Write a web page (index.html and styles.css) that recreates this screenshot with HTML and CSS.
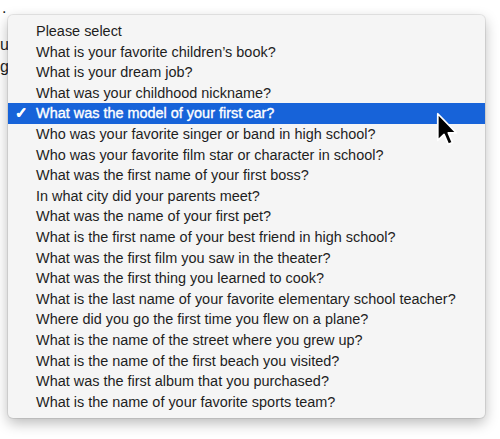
FILE: index.html
```html
<!DOCTYPE html>
<html>
<head>
<meta charset="utf-8">
<link rel="stylesheet" href="styles.css">
</head>
<body>
<div class="page">
  <div class="bg-line l1">.</div>
  <div class="bg-line l2">ue</div>
  <div class="bg-line l3">g</div>
</div>
<ul class="menu">
  <li class="item">Please select</li>
  <li class="item">What is your favorite children’s book?</li>
  <li class="item">What is your dream job?</li>
  <li class="item">What was your childhood nickname?</li>
  <li class="item selected"><span class="check">✓</span>What was the model of your first car?</li>
  <li class="item">Who was your favorite singer or band in high school?</li>
  <li class="item">Who was your favorite film star or character in school?</li>
  <li class="item">What was the first name of your first boss?</li>
  <li class="item">In what city did your parents meet?</li>
  <li class="item">What was the name of your first pet?</li>
  <li class="item">What is the first name of your best friend in high school?</li>
  <li class="item">What was the first film you saw in the theater?</li>
  <li class="item">What was the first thing you learned to cook?</li>
  <li class="item">What is the last name of your favorite elementary school teacher?</li>
  <li class="item">Where did you go the first time you flew on a plane?</li>
  <li class="item">What is the name of the street where you grew up?</li>
  <li class="item">What is the name of the first beach you visited?</li>
  <li class="item">What was the first album that you purchased?</li>
  <li class="item">What is the name of your favorite sports team?</li>
</ul>
<svg class="cursor" width="22" height="36" viewBox="0 0 12.5 20.5">
  <path d="M1 1 L1 16.2 L4.6 12.8 L7 18.4 L9.4 17.4 L7 11.9 L11.6 11.9 Z" fill="#000" stroke="#fff" stroke-width="1" stroke-linejoin="round"/>
</svg>
</body>
</html>
```
FILE: styles.css
```css
html, body {
  margin: 0;
  padding: 0;
  background: #ffffff;
}
body {
  width: 500px;
  height: 439px;
  overflow: hidden;
  position: relative;
  font-family: "Liberation Sans", Arial, sans-serif;
  color: #1e1e1e;
}
.bg-line {
  font-size: 16px;
  line-height: 20px;
  height: 20px;
  margin-left: 0;
}
.l1 {
  line-height: 16px;
  height: 16px;
  margin-left: 2px;
}
.l2 { margin-top: 19px; }
.l3 { margin-top: 2px; }
.menu {
  position: absolute;
  left: 8px;
  top: 15px;
  width: 477px;
  margin: 0;
  padding: 6px 0;
  list-style: none;
  background: #f5f5f5;
  border-radius: 5px;
  box-shadow: 0 0 0 1px rgba(0,0,0,0.08), 0 5px 14px rgba(0,0,0,0.28);
  box-sizing: border-box;
}
.item {
  position: relative;
  height: 20.6px;
  line-height: 20.6px;
  padding-left: 28px;
  font-size: 14.45px;
  color: #1e1e1e;
  white-space: nowrap;
}
.selected {
  background: #1763d9;
  color: #ffffff;
  -webkit-text-stroke: 0.35px #ffffff;
}
.check {
  position: absolute;
  left: 7px;
  top: 0;
  font-size: 15px;
  font-weight: bold;
  color: #fff;
}
.cursor {
  position: absolute;
  left: 436px;
  top: 112px;
}
```
